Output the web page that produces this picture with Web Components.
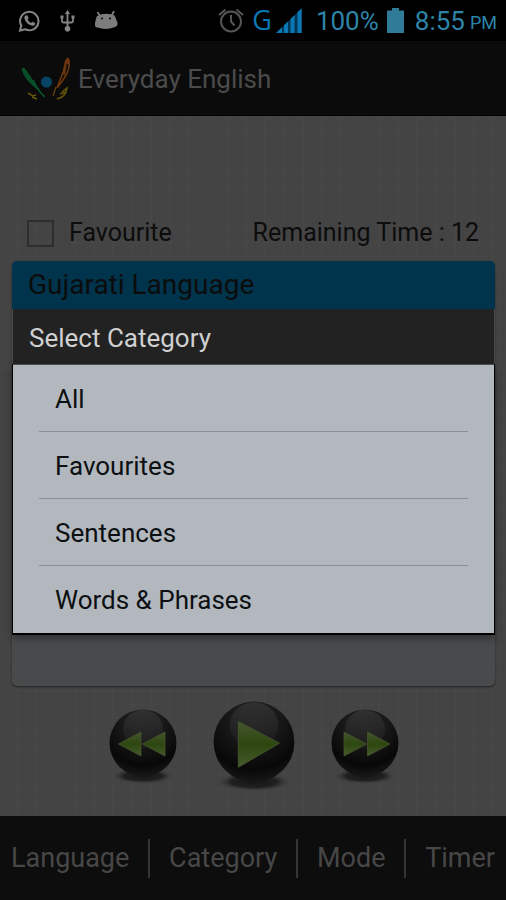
<!DOCTYPE html>
<html lang="en">
<head>
<meta charset="utf-8">
<meta name="viewport" content="width=device-width, initial-scale=1">
<title>Everyday English</title>
<style>
html,body{margin:0;background:#000}
body{font-family:Roboto,"Noto Sans",sans-serif;font-size:25px;line-height:32px;color:#0c0c0c}
</style>
</head>
<body>
<app-screen>
  <status-bar slot="status"></status-bar>
  <app-bar>Everyday English</app-bar>
  <lesson-view></lesson-view>
  <bottom-bar></bottom-bar>
  <category-dialog slot="dialog" heading="Select Category">
    <category-option>All</category-option>
    <category-option>Favourites</category-option>
    <category-option>Sentences</category-option>
    <category-option>Words &amp; Phrases</category-option>
  </category-dialog>
</app-screen>
<script>
function define(name, html, setup) {
  const template = document.createElement('template');
  template.innerHTML = html;
  customElements.define(name, class extends HTMLElement {
    constructor() {
      super();
      this.attachShadow({ mode: 'open' }).append(template.content.cloneNode(true));
    }
    connectedCallback() { if (setup) setup(this, this.shadowRoot); }
  });
}

define('app-screen', `
<style>
:host{display:flex;flex-direction:column;min-height:100vh}
main{position:relative;flex:1;display:flex;flex-direction:column}
</style>
<slot name="status"></slot>
<main><slot></slot><slot name="dialog"></slot></main>`);

define('status-bar', `
<style>
:host{display:flex;align-items:center;justify-content:space-between;height:41px;padding:0 9px 0 18px;background:#000;color:#2c85a8;box-sizing:border-box}
div{display:flex;align-items:center}
.left{gap:19px}
svg{display:block}
.alarm{margin-right:8px}
.g{font:500 27px/30px "Open Sans",sans-serif;color:#0a78b4;padding-bottom:2px}
.signal{margin:0 14px 0 4px}
.pct,.time{font-size:26px}
.batt{margin:0 11px 0 8px}
small{font-size:18px;margin-left:5px;align-self:flex-end;line-height:28px}
</style>
<div class="left">
  <svg width="23" height="22" viewBox="0 0 23 22" fill="none" stroke="#858585" aria-label="WhatsApp"><path d="M2 20.5 3.3 15.600A9.200 9.200 0 1 1 7 19.200Z" stroke-width="2"/><path d="M7.500 5.500 9.400 5.200 10.600 8.200 9.500 9.600C10.300 11.200 11.600 12.400 13 13L14.500 11.700 17.300 13.200C17.200 15 15.800 15.800 14.400 15.700 10.500 15.200 7 11.500 6.400 8 6.300 7 6.800 6 7.500 5.500Z" fill="#858585" stroke="none"/></svg>
  <svg width="15" height="22" viewBox="0 0 15 22" fill="none" stroke="#858585" stroke-width="1.800" aria-label="USB"><path d="M7.500 3V18M2 8V11Q2 12.500 3.500 12.500H7.500M13 8V11Q13 12.500 11.500 12.500H7.500"/><path d="M7.500 0 10.200 4H4.800ZM.500 5.500H3.500V8.500H.500ZM11.500 5.500H14.500V8.500H11.500Z" fill="#858585" stroke="none"/><circle cx="7.500" cy="18.800" r="2.800" fill="#858585" stroke="none"/></svg>
  <svg width="24" height="19" viewBox="0 0 24 19" aria-label="Android"><path d="M3.500 1 6 5M20 0 17.500 5" stroke="#7d7d7d" stroke-width="1.800"/><path d="M3 5Q12 1 20.500 4.500C21.500 6 22 7.500 22.500 9.500 24.500 12 23.500 15.500 21 16 15 18.500 9 18.500 3.500 16.500.500 17 .500 12.500 1.500 10.500 1.700 8 2.300 6.500 3 5Z" fill="#7d7d7d"/><circle cx="8" cy="7.500" r="1.100" fill="#111"/><circle cx="16" cy="7.500" r="1.100" fill="#111"/></svg>
</div>
<div>
  <svg class="alarm" width="26" height="25" viewBox="0 0 26 25" fill="none" stroke="#555" aria-label="Alarm"><circle cx="13" cy="13.500" r="10" stroke-width="2"/><path d="M13 7V13.500L16.500 17.500M1 7 7.500 1.500M25 7 18.500 1.500" stroke-width="2"/></svg>
  <span class="g">G</span>
  <svg class="signal" width="26" height="25" viewBox="0 0 26 25" aria-label="Signal"><path d="M0 25 26 0V25Z" fill="#053554"/><path d="M0 25 6 19.200V25ZM8 25V17.300L12 13.500V25ZM14.500 25V11L18.500 7.200V25ZM21.500 25V4.300L25.500.500V25Z" fill="#0a78b4"/></svg>
  <span class="pct">100%</span>
  <svg class="batt" width="17" height="25" viewBox="0 0 17 25" aria-label="Battery"><path d="M0 2.500H5V0H12V2.500H17V25H0Z" fill="#2f7b98"/></svg>
  <span class="time">8:55</span><small>PM</small>
</div>`);

define('app-bar', `
<style>
:host{display:block;background:#0b0b0b;color:#4b4b4b;border-bottom:1px solid #020202}
header{display:flex;align-items:center;height:74px;padding:2px 20px 0;gap:7px;box-sizing:border-box}
h1{margin:0;font-size:26px;font-weight:400;line-height:32px}
</style>
<header>
<svg width="51" height="44" viewBox="0 0 51 44" fill="none" aria-hidden="true">
<path d="M2 12C5 21 10 27 19 33C14 26 10 19 4 11Z" fill="#064d28" stroke="#07552c"/><path d="M13 23C16 30 20 36 25 40" stroke="#0a5a30" stroke-width="1.500"/>
<path d="M48 1C43 5 46 11 42 18L37 31M48 1C51 8 48 16 43 23L37 31M46 8 44 18" stroke="#6c370e" stroke-width="1.600"/><path d="M48 1 50 5 47 8 45 5Z" fill="#743414"/><path d="M36 30 33 39" stroke="#66400e" stroke-width="1.300"/>
<circle cx="26.500" cy="25" r="5.500" fill="#064365"/>
<path d="M8 36 13 39 16 38M12 40 17 42M42 35 47 31 46 35 40 37M46 36 42 40 37 42" stroke="#65560a" stroke-width="1.500"/>
</svg>
<h1><slot></slot></h1>
</header>`);

define('round-button', `
<style>
:host{display:block;width:var(--size,68px)}
button{display:block;width:100%;padding:0;border:0;background:none;cursor:pointer}
svg{display:block;width:100%;overflow:visible}
</style>
<button type="button"><svg viewBox="0 0 68 76" aria-hidden="true">
<defs>
<radialGradient id="ball" cx=".5" cy=".2" r=".85"><stop offset="0" stop-color="#282828"/><stop offset=".45" stop-color="#151515"/><stop offset=".75" stop-color="#080808"/><stop offset="1" stop-color="#1c1c1c"/></radialGradient>
<linearGradient id="gloss" x2="0" y2="1"><stop offset="0" stop-color="#303030"/><stop offset="1" stop-color="#242424" stop-opacity=".3"/></linearGradient>
<linearGradient id="green" x2="0" y2="1"><stop offset="0" stop-color="#465730"/><stop offset=".5" stop-color="#2d470f"/><stop offset="1" stop-color="#465a2c"/></linearGradient>
<radialGradient id="shade"><stop offset="0" stop-color="#151515"/><stop offset=".6" stop-color="#1c1c1c" stop-opacity=".9"/><stop offset="1" stop-color="#444" stop-opacity="0"/></radialGradient>
</defs>
<ellipse cx="34" cy="67" rx="32" ry="8" fill="url(#shade)"/>
<circle cx="34" cy="34" r="33.500" fill="url(#ball)"/>
<ellipse cx="34" cy="20" rx="20" ry="19" fill="url(#gloss)"/>
<path class="glyph" fill="url(#green)" stroke="#46522f" stroke-width=".8"/>
</svg></button>`, (host, root) => {
  const glyphs = {
    previous: 'M32 23V47L9.500 35ZM56 23V47L33.500 35Z',
    play: 'M21 17V55L55 35Z',
    next: 'M13 23V47L35.500 35ZM36.500 23V47L59 35Z'
  };
  root.querySelector('.glyph').setAttribute('d', glyphs[host.getAttribute('kind')]);
  root.querySelector('button').setAttribute('aria-label', host.getAttribute('kind'));
});

define('lesson-view', `
<style>
:host{flex:1;display:flex;flex-direction:column;padding:101px 11px 0 12px;
background:
repeating-linear-gradient(0deg,#0000 0 5px,#00000005 5px 7px,#0000 7px 13px,#ffffff03 13px 14px),
repeating-linear-gradient(90deg,#0000 0 7px,#00000005 7px 9px,#0000 9px 17px,#ffffff03 17px 19px),
#444}
.top{display:flex;justify-content:space-between;align-items:center;padding:0 16px 0 15px;margin-bottom:12px}
label{display:flex;align-items:center;gap:15px}
input{appearance:none;width:27px;height:27px;margin:0;border:2px solid #2e2e2e;box-sizing:border-box}
section{flex:1;display:flex;flex-direction:column;border-radius:5px;background:#494a4b;box-shadow:0 1px 2px #222;overflow:hidden}
h2{margin:0;padding:8px 16px;font-size:28px;line-height:32px;font-weight:400;background:#00344c}
nav{display:flex;justify-content:center;align-items:center;gap:36px;padding:15px 0 23px}
.big{--size:82px}
</style>
<div class="top"><label><input type="checkbox">Favourite</label><span>Remaining Time : 12</span></div>
<section><h2>Gujarati Language</h2></section>
<nav><round-button kind="previous"></round-button><round-button class="big" kind="play"></round-button><round-button kind="next"></round-button></nav>`);

define('bottom-bar', `
<style>
:host{display:block;background:#0d0d0d;color:#474747}
nav{display:flex;justify-content:space-between;align-items:center;height:84px;padding:0 11px;box-sizing:border-box}
button{padding:0;border:0;background:none;font:27px/32px Roboto,"Noto Sans",sans-serif;color:inherit;cursor:pointer}
i{width:2px;height:39px;background:#353535}
</style>
<nav><button type="button">Language</button><i></i><button type="button">Category</button><i></i><button type="button">Mode</button><i></i><button type="button">Timer</button></nav>`);

define('category-dialog', `
<style>
:host{position:absolute;inset:0;display:flex;align-items:center;padding:0 12px 0 13px}
.box{flex:1;background:#b2b8be}
h2{margin:0;padding:13px 16px 10px;font-size:26px;line-height:32px;font-weight:400;color:#d0d0d0;background:#222}
.list{padding:0 26px 1px;border-top:1px solid #4a4e50;box-shadow:0 1px 0 1px #000,0 5px 8px #0006}
</style>
<div class="box" role="dialog" aria-modal="true" aria-labelledby="title"><h2 id="title"></h2><div class="list"><slot></slot></div></div>`,
(host, root) => { root.querySelector('h2').textContent = host.getAttribute('heading'); });

define('category-option', `
<style>
:host{display:block;border-bottom:1px solid #8b9095}
:host(:last-child){border-bottom:0}
button{display:block;width:100%;padding:18px 16px 16px;border:0;background:none;text-align:left;font:26px/32px Roboto,"Noto Sans",sans-serif;color:#0d1012;cursor:pointer}
</style>
<button type="button"><slot></slot></button>`);
</script>
</body>
</html>
